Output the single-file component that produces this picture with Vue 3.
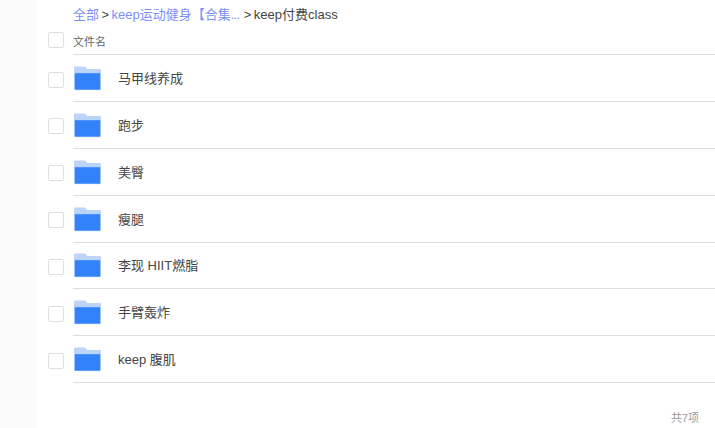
<script setup>
const files = ['马甲线养成', '跑步', '美臀', '瘦腿', '李现 HIIT燃脂', '手臂轰炸', 'keep 腹肌']
</script>

<template>
  <div class="page">
    <div class="sidebar"></div>
    <div class="main">
      <div class="crumbs">
        <a class="link">全部</a>
        <span class="sep">&gt;</span>
        <a class="link link_long">keep运动健身【合集<span class="dots">...</span></a>
        <span class="sep">&gt;</span>
        <span>keep付费class</span>
      </div>
      <div class="head">
        <span class="check check_head"></span>
        <div class="head_label">文件名</div>
      </div>
      <div v-for="name in files" :key="name" class="row">
        <span class="check check_row"></span>
        <div class="row_body">
          <svg class="folder" width="27" height="25" viewBox="0 0 27 25">
            <path d="M0 1.7A1.2 1.2 0 0 1 1.2.5h9.6l2.6 2.4h12.4A1.2 1.2 0 0 1 27 4.1V6.8H0z" fill="#bcd4f7" />
            <path d="M.3 6.8h26.4v16a1.2 1.2 0 0 1-1.2 1.2H1.5a1.2 1.2 0 0 1-1.2-1.2z" fill="#3282fa" stroke="#d3e4fd" stroke-width=".6" />
          </svg>
          <span class="name">{{ name }}</span>
        </div>
      </div>
      <div class="count">共7项</div>
    </div>
  </div>
</template>

<style scoped>
.page {
  display: flex;
  height: 428px;
  width: 715px;
  overflow: hidden;
  font-family: "Liberation Sans", "Noto Sans CJK SC", sans-serif;
}

.sidebar {
  width: 37px;
  background: #fafafa;
  flex-shrink: 0;
}

.main {
  flex: 1;
  padding-left: 11px;
  background: #fff;
}

.crumbs {
  height: 29px;
  padding-left: 25px;
  font-size: 13px;
  line-height: 29px;
  color: #444;
}

.link {
  color: #7b8ff7;
}

.link_long {
  padding-right: 2px;
}

.dots {
  letter-spacing: -0.8px;
}

.sep {
  margin: 0 2.5px 0 2.5px;
}

.head {
  display: flex;
  align-items: center;
  height: 26.15px;
}

.head_label {
  flex: 1;
  height: 26.15px;
  margin-left: 9px;
  box-sizing: border-box;
  font-size: 11px;
  line-height: 27px;
  color: #666;
  border-bottom: 1px solid #ddd;
}

.check {
  width: 16px;
  height: 16px;
  box-sizing: border-box;
  flex-shrink: 0;
  background: #fff;
  border: 1px solid #dfdfdf;
  border-radius: 2px;
}

.check_head {
  margin-bottom: 4px;
}

.check_row {
  margin-top: 2px;
}

.row {
  display: flex;
  align-items: center;
  height: 46.857px;
}

.row_body {
  display: flex;
  flex: 1;
  align-items: center;
  height: 46.857px;
  margin-left: 9px;
  padding-top: 2px;
  box-sizing: border-box;
  border-bottom: 1px solid #ddd;
}

.folder {
  flex-shrink: 0;
  margin-left: 1px;
  margin-bottom: 1px;
}

.name {
  margin-left: 17px;
  font-size: 13px;
  line-height: 44px;
  color: #444;
}

.count {
  margin-top: 26px;
  padding-right: 16px;
  font-size: 11px;
  text-align: right;
  color: #999;
}
</style>

<style>
body {
  margin: 0;
}
</style>
